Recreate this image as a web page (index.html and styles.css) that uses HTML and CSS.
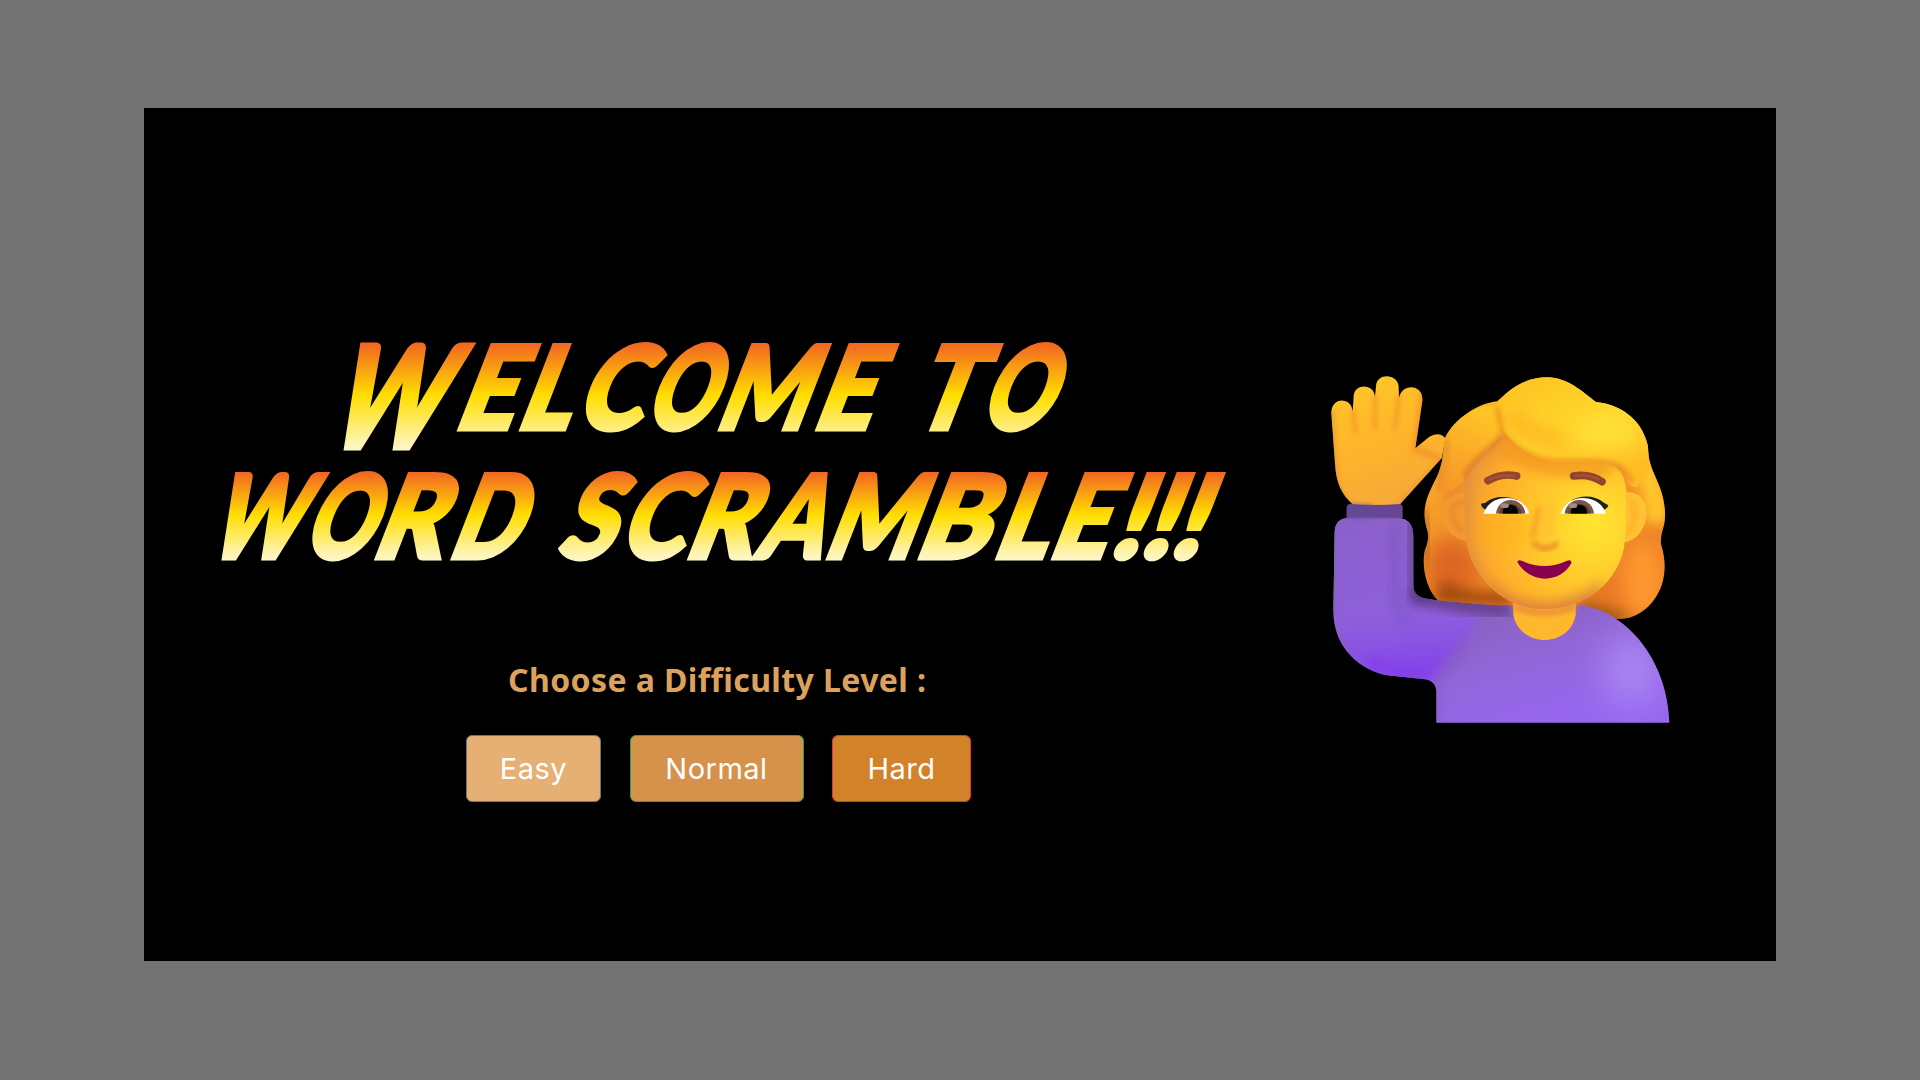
FILE: index.html
```html
<!DOCTYPE html>
<html lang="en">
<head>
<meta charset="utf-8">
<title>Word Scramble</title>
<link rel="stylesheet" href="styles.css">
</head>
<body>
<main class="panel">
  <section class="intro">
    <svg class="title" viewBox="200 330 1040 250" role="img" aria-label="Welcome to word scramble!!!">
      <defs>
        <linearGradient id="fire1" gradientUnits="userSpaceOnUse" x1="0" y1="-86" x2="0" y2="23">
          <stop offset="0" stop-color="#f26522"/><stop offset=".48" stop-color="#ffdd00"/><stop offset=".93" stop-color="#fdf5b8"/><stop offset="1" stop-color="#fdf6c8"/>
        </linearGradient>
        <linearGradient id="fire2" gradientUnits="userSpaceOnUse" x1="0" y1="-86" x2="0" y2="3">
          <stop offset="0" stop-color="#f26522"/><stop offset=".48" stop-color="#ffdd00"/><stop offset=".93" stop-color="#fdf5b8"/><stop offset="1" stop-color="#fdf6c8"/>
        </linearGradient>
      </defs>
      <g class="line" fill="url(#fire1)" stroke="url(#fire1)" transform="translate(0 429) skewX(-21.2)">
        <text><tspan class="cap" x="329" y="19" textLength="112" lengthAdjust="spacingAndGlyphs">W</tspan><tspan x="452" y="0" textLength="58" lengthAdjust="spacingAndGlyphs">E</tspan><tspan x="514" textLength="52" lengthAdjust="spacingAndGlyphs">L</tspan><tspan x="573" textLength="65" lengthAdjust="spacingAndGlyphs">C</tspan><tspan x="642" textLength="67" lengthAdjust="spacingAndGlyphs">O</tspan><tspan x="713" textLength="91" lengthAdjust="spacingAndGlyphs">M</tspan><tspan x="810" textLength="58" lengthAdjust="spacingAndGlyphs">E</tspan></text>
        <text><tspan x="909" textLength="61" lengthAdjust="spacingAndGlyphs">T</tspan><tspan x="977" textLength="70" lengthAdjust="spacingAndGlyphs">O</tspan></text>
      </g>
      <g class="line" fill="url(#fire2)" stroke="url(#fire2)" transform="translate(0 558) skewX(-21.2)">
        <text><tspan x="204" textLength="91" lengthAdjust="spacingAndGlyphs">W</tspan><tspan x="300" textLength="68" lengthAdjust="spacingAndGlyphs">O</tspan><tspan x="369" textLength="69" lengthAdjust="spacingAndGlyphs">R</tspan><tspan x="446" textLength="69" lengthAdjust="spacingAndGlyphs">D</tspan></text>
        <text><tspan x="555" textLength="55" lengthAdjust="spacingAndGlyphs">S</tspan><tspan x="616" textLength="64" lengthAdjust="spacingAndGlyphs">C</tspan><tspan x="682" textLength="67" lengthAdjust="spacingAndGlyphs">R</tspan><tspan x="754" textLength="64" lengthAdjust="spacingAndGlyphs">A</tspan><tspan x="821" textLength="90" lengthAdjust="spacingAndGlyphs">M</tspan><tspan x="912" textLength="73" lengthAdjust="spacingAndGlyphs">B</tspan><tspan x="990" textLength="53" lengthAdjust="spacingAndGlyphs">L</tspan><tspan x="1046" textLength="57" lengthAdjust="spacingAndGlyphs">E</tspan><tspan x="1107" textLength="32" lengthAdjust="spacingAndGlyphs">!</tspan><tspan x="1137" textLength="32" lengthAdjust="spacingAndGlyphs">!</tspan><tspan x="1167" textLength="32" lengthAdjust="spacingAndGlyphs">!</tspan></text>
      </g>
    </svg>
    <h2 class="prompt">Choose a Difficulty Level :</h2>
    <div class="levels">
      <button class="level easy">Easy</button>
      <button class="level normal">Normal</button>
      <button class="level hard">Hard</button>
    </div>
  </section>
  <svg class="person" viewBox="0 0 1140 1140" aria-hidden="true">
    <defs>
      <filter id="b8" x="-50%" y="-50%" width="200%" height="200%"><feGaussianBlur stdDeviation="8"/></filter>
      <filter id="b16" x="-50%" y="-50%" width="200%" height="200%"><feGaussianBlur stdDeviation="16"/></filter>
      <filter id="b30" x="-100%" y="-100%" width="300%" height="300%"><feGaussianBlur stdDeviation="30"/></filter>
      <filter id="b60" x="-150%" y="-150%" width="400%" height="400%"><feGaussianBlur stdDeviation="55"/></filter>
      <linearGradient id="hair" x1="0" y1="0" x2=".25" y2="1"><stop offset="0" stop-color="#ffc323"/><stop offset=".45" stop-color="#f9a32a"/><stop offset="1" stop-color="#e87826"/></linearGradient>
      <linearGradient id="fringe" x1="0" y1="0" x2=".6" y2="1"><stop offset="0" stop-color="#ffc020"/><stop offset=".6" stop-color="#ffd92f"/><stop offset="1" stop-color="#ffbd24"/></linearGradient>
      <linearGradient id="lock" x1=".6" y1="0" x2=".2" y2="1"><stop offset="0" stop-color="#ffc526"/><stop offset="1" stop-color="#f79428"/></linearGradient>
      <radialGradient id="face" gradientUnits="userSpaceOnUse" cx="850" cy="500" r="420"><stop offset="0" stop-color="#ffe631"/><stop offset=".35" stop-color="#ffcd2c"/><stop offset=".75" stop-color="#ffad2a"/><stop offset="1" stop-color="#e6913c"/></radialGradient>
      <linearGradient id="palm" x1=".3" y1="0" x2=".6" y2="1"><stop offset="0" stop-color="#ffc629"/><stop offset=".55" stop-color="#ffb32b"/><stop offset="1" stop-color="#f5a93b"/></linearGradient>
      <linearGradient id="sleeve" gradientUnits="userSpaceOnUse" x1="180" y1="480" x2="230" y2="950"><stop offset="0" stop-color="#8b60cb"/><stop offset=".6" stop-color="#8e61dc"/><stop offset="1" stop-color="#8545e8"/></linearGradient>
      <linearGradient id="body" gradientUnits="userSpaceOnUse" x1="600" y1="730" x2="700" y2="1090"><stop offset="0" stop-color="#8962bd"/><stop offset=".45" stop-color="#9166d8"/><stop offset="1" stop-color="#9666ef"/></linearGradient>
      <path id="hairShape" d="M405 235C430 180 500 130 562 124C610 75 655 52 712 52C775 54 815 94 858 126C945 135 1000 190 1014 260C1013 340 1065 370 1065 465C1065 505 1050 520 1053 552C1068 600 1066 640 1055 675C1035 730 990 777 925 777L850 760L800 745L560 738L385 722C350 690 333 620 345 570C352 553 357 535 353 515C334 455 344 420 380 352C405 300 398 265 405 235Z"/>
      <path id="faceShape" d="M462 350C500 290 540 245 585 222C640 275 690 305 760 308H880C925 312 945 338 950 400L945 540C935 670 815 748 705 748C590 748 475 660 464 510Z"/>
      <path id="bodyShape" d="M74 520Q74 474 115 474H265Q310 476 310 530V680Q312 710 350 716C430 728 520 736 610 736H815C857 743 890 757 922 779C1018 845 1075 965 1078 1088H379V1000Q380 963 345 958L225 945C130 920 70 850 70 750Z"/>
      <path id="handShape" d="M130 435C95 405 78 370 75 310L64 160C63 110 125 110 128 155L131 108C133 68 195 70 195 112L198 78C200 37 264 40 266 80L267 115C274 68 341 72 337 122L316 265L358 230Q390 213 406 235L396 293L268 435Z"/>
      <clipPath id="hairClip"><use href="#hairShape"/></clipPath>
      <clipPath id="faceClip"><use href="#faceShape"/></clipPath>
      <clipPath id="bodyClip"><use href="#bodyShape"/></clipPath>
      <clipPath id="handClip"><use href="#handShape"/></clipPath>
      <clipPath id="eyeL"><path d="M520 461C535 425 560 414 592 414C625 414 652 435 658 461Z"/></clipPath>
      <clipPath id="eyeR"><path d="M752 461C762 430 790 414 818 414C850 414 878 430 888 461Z"/></clipPath>
    </defs>

    <use href="#handShape" fill="url(#palm)"/>
    <g clip-path="url(#handClip)">
      <g filter="url(#b8)" fill="none" stroke="#ea8e24" stroke-width="11" stroke-linecap="round" opacity=".75">
        <path d="M129 150L136 215M196 105L193 205M267 110L255 205"/>
      </g>
      <path d="M338 100L316 268L400 300L268 440" fill="none" stroke="#ed8d2b" stroke-width="18" filter="url(#b8)" opacity=".7"/>
      <path d="M66 150L76 320Q80 400 130 440" fill="none" stroke="#e08f38" stroke-width="12" filter="url(#b8)" opacity=".7"/>
    </g>

    <use href="#hairShape" fill="url(#hair)"/>
    <g clip-path="url(#hairClip)">
      <ellipse cx="425" cy="630" rx="75" ry="100" fill="#dc6621" filter="url(#b30)"/>
      <path d="M370 722Q450 735 600 735V690Q480 710 400 660Z" fill="#9e4a0a" filter="url(#b16)" opacity=".9"/>
      <ellipse cx="435" cy="410" rx="36" ry="70" fill="#ee8c2c" filter="url(#b16)"/>
      <path d="M340 450Q365 550 342 610" fill="none" stroke="#b7691b" stroke-width="20" filter="url(#b16)"/>
      <ellipse cx="1000" cy="660" rx="65" ry="115" fill="#ff982d" filter="url(#b30)"/>
      <path d="M820 725Q910 735 960 770L910 800L800 760Z" fill="#a95f16" filter="url(#b16)"/>
      <path d="M965 250C1015 340 1040 400 1040 490" fill="none" stroke="#ffc52c" stroke-width="65" filter="url(#b16)"/>
    </g>

    <use href="#bodyShape" fill="url(#body)"/>
    <g clip-path="url(#bodyClip)">
      <path d="M70 470H310V690Q330 730 520 770L370 960L210 950Q70 910 70 740Z" fill="url(#sleeve)" filter="url(#b16)"/>
      <path d="M311 470V690Q320 715 350 718" fill="none" stroke="#64418c" stroke-width="28" filter="url(#b16)"/>
      <path d="M300 705Q450 740 600 748" fill="none" stroke="#553279" stroke-width="45" filter="url(#b16)" opacity=".7"/>
      <path d="M252 500V720Q252 760 300 785" fill="none" stroke="#744eae" stroke-width="14" filter="url(#b16)" opacity=".7"/>
      <path d="M470 840Q440 920 382 955V1088" fill="none" stroke="#8057bd" stroke-width="12" filter="url(#b16)"/>
      <ellipse cx="965" cy="930" rx="85" ry="110" fill="#aa86f2" filter="url(#b60)"/>
      <path d="M180 905Q250 952 360 940" fill="none" stroke="#843ce9" stroke-width="35" filter="url(#b16)"/>
      <path d="M72 490L71 750" fill="none" stroke="#8068b4" stroke-width="12"/>
    </g>
    <path d="M118 432Q194 438 270 432Q278 434 278 442V474H110V442Q110 434 118 432Z" fill="#674595"/>
    <path d="M125 435L190 438V470H112" fill="#604994" filter="url(#b8)"/>
    <path d="M114 474H265" stroke="#7751b1" stroke-width="5"/>

    <path d="M610 710H797V765C778 865 630 865 610 765Z" fill="#ffb82d"/>
    <path d="M612 725Q705 770 795 725V750Q700 785 612 750Z" fill="#eb9236" filter="url(#b8)"/>
    <path d="M464 400C415 395 395 435 399 475C405 515 440 540 468 542Z" fill="#f39a31"/>
    <path d="M462 425C430 420 422 450 430 480Q440 510 464 516" fill="none" stroke="#e88529" stroke-width="12" filter="url(#b8)"/>
    <path d="M950 397C992 394 1013 430 1010 466C1004 515 975 543 942 547Z" fill="#ffc232"/>
    <path d="M955 420Q985 440 970 490L948 525" fill="none" stroke="#ffb029" stroke-width="13" filter="url(#b8)"/>

    <use href="#faceShape" fill="url(#face)"/>
    <g clip-path="url(#faceClip)">
      <ellipse cx="580" cy="510" rx="60" ry="22" fill="#ffae14" filter="url(#b30)"/>
      <path d="M535 665Q700 790 880 660L850 780H580Z" fill="#d97f40" filter="url(#b16)" opacity=".85"/>
      <path d="M465 345V520Q480 650 580 715" fill="none" stroke="#df8b38" stroke-width="18" filter="url(#b16)"/>
      <path d="M550 240Q640 320 770 330H900" fill="none" stroke="#f49a20" stroke-width="36" filter="url(#b16)"/>
      <path d="M690 440Q678 500 667 535" fill="none" stroke="#f59a26" stroke-width="18" filter="url(#b8)" opacity=".8"/>
      <path d="M668 548Q705 582 744 548" fill="none" stroke="#ec8a2b" stroke-width="15" filter="url(#b8)"/>
      <path d="M698 430L685 525Q705 552 735 525V430Z" fill="#ffc52e" filter="url(#b8)"/>
    </g>

    <path d="M555 142C585 95 640 52 712 52C775 54 815 94 858 126C945 135 1000 190 1014 260L1018 330L980 380Q955 385 950 350C945 325 925 312 880 308H760C675 306 620 265 582 217Q568 190 555 142Z" fill="url(#fringe)"/>
    <path d="M405 235C430 180 500 130 560 138C575 180 580 210 570 230C545 270 500 290 462 350Q442 400 380 400Q382 350 397 300Z" fill="url(#lock)"/>
    <g clip-path="url(#hairClip)">
      <path d="M560 140Q575 190 577 218C625 275 690 303 760 304H870Q950 310 965 370" fill="none" stroke="#ec8923" stroke-width="12" filter="url(#b8)"/>
      <path d="M574 225C545 270 490 290 460 350" fill="none" stroke="#db762a" stroke-width="11" filter="url(#b8)"/>
      <path d="M408 235Q395 285 378 370" fill="none" stroke="#d98829" stroke-width="18" filter="url(#b16)"/>
      <path d="M590 160Q660 240 770 245" fill="none" stroke="#ffad1f" stroke-width="45" filter="url(#b30)"/>
      <ellipse cx="900" cy="220" rx="85" ry="40" fill="#ffe239" filter="url(#b30)"/>
    </g>

    <g fill="none" stroke-linecap="round" stroke-width="23">
      <path d="M534 362Q575 338 620 348" stroke="#91472e"/>
      <path d="M791 348Q840 340 876 365" stroke="#91452e"/>
      <path d="M540 358Q575 342 612 348M798 347Q838 343 866 358" stroke="#a65139" stroke-width="7"/>
    </g>
    <path d="M513 431L527 428C550 407 590 406 625 421L530 450Q514 444 513 431Z" fill="#202020"/>
    <path d="M895 436L882 428C850 404 815 406 784 421L878 450Q894 446 895 436Z" fill="#202020"/>
    <path d="M520 461C535 425 560 414 592 414C625 414 652 435 658 461Z" fill="#fff"/>
    <path d="M752 461C762 430 790 414 818 414C850 414 878 430 888 461Z" fill="#fff"/>
    <g clip-path="url(#eyeL)"><circle cx="602" cy="464" r="44" fill="#795548"/><circle cx="602" cy="466" r="34" fill="#543d38"/><ellipse cx="601" cy="456" rx="23" ry="22" fill="#000"/><ellipse cx="584" cy="437" rx="13" ry="7" fill="#a38b85"/></g>
    <g clip-path="url(#eyeR)"><circle cx="808" cy="464" r="44" fill="#795548"/><circle cx="808" cy="466" r="34" fill="#543d38"/><ellipse cx="807" cy="456" rx="24" ry="22" fill="#000"/><ellipse cx="789" cy="437" rx="13" ry="7" fill="#a38b85"/></g>
    <path d="M622 606Q624 597 637 603Q705 634 771 602Q786 597 784 610C750 671 661 673 622 606Z" fill="#88004d"/>
  </svg>
</main>
</body>
</html>
```
FILE: styles.css
```css
body {
  margin: 0;
  height: 1080px;
  box-sizing: border-box;
  padding: 108px 144px 119px;
  background: #737373;
}

.panel {
  display: flex;
  align-items: flex-start;
  height: 853px;
  background: #000;
}

.intro {
  width: 1040px;
  padding: 222px 0 0 56px;
}

.title {
  display: block;
  width: 1040px;
  height: 250px;
  overflow: visible;
}

.line {
  font-family: Lato, sans-serif;
  font-weight: 900;
  font-size: 115px;
  stroke-width: 5px;
  stroke-linejoin: miter;
}

.cap {
  font-size: 142px;
}

.prompt {
  margin: 77px 0 0 308px;
  font: 700 32px/46px "Noto Sans", sans-serif;
  letter-spacing: 0.4px;
  color: #dda15e;
  white-space: nowrap;
}

.levels {
  display: flex;
  gap: 28.5px;
  margin: 32px 0 0 266px;
}

.level {
  box-sizing: border-box;
  height: 67px;
  padding: 0;
  border: 1px solid;
  border-radius: 6px;
  font: 400 29px/65px Inter, sans-serif;
  letter-spacing: 0.5px;
  color: #fff;
}

.easy {
  width: 135px;
  background: #e6b074;
  border-color: #6c757d;
}

.normal {
  width: 174px;
  background: #d6914b;
  border-color: #28a745;
}

.hard {
  width: 139px;
  background: #d28228;
  border-color: #dc3545;
}

.person {
  width: 380px;
  height: 380px;
  margin: 252px 0 0 70px;
  flex: none;
}
```
